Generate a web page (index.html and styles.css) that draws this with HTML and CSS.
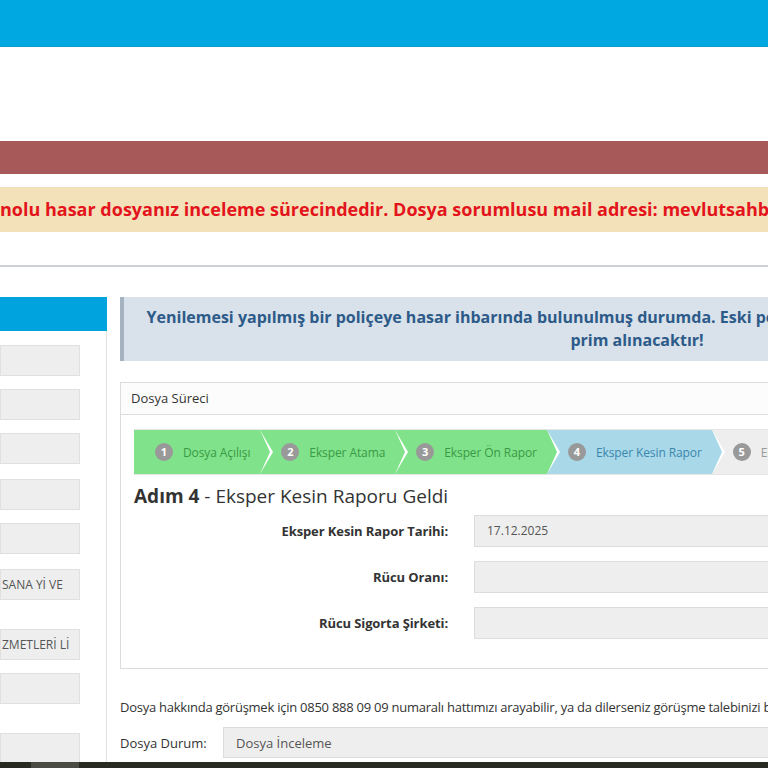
FILE: index.html
```html
<!DOCTYPE html>
<html lang="tr">

<head>
    <meta charset="UTF-8">
    <meta name="viewport" content="width=device-width, initial-scale=1.0">
    <title>Hasar Dosyası</title>
    <link rel="stylesheet" href="styles.css">
</head>

<body>
    <div class="topbar"></div>
    <div class="logo-area"></div>
    <div class="menu"></div>

    <div class="alert">nolu hasar dosyanız inceleme sürecindedir. Dosya sorumlusu mail adresi: mevlutsahbaz@sigorta.com.tr</div>

    <div class="divider"></div>

    <div class="content">
        <div class="side">
            <div class="side-head"></div>
            <div class="side-body">
                <div class="field"></div>
                <div class="field"></div>
                <div class="field field-gap"></div>
                <div class="field"></div>
                <div class="field field-gap"></div>
                <div class="field field-wide">SANA Yİ VE</div>
                <div class="field">ZMETLERİ Lİ</div>
                <div class="field field-wide"></div>
                <div class="field"></div>
            </div>
        </div>

        <div class="main">
            <div class="notice">
                Yenilemesi yapılmış bir poliçeye hasar ihbarında bulunulmuş durumda. Eski poliçeden hasarlı olduğu için yeni poliçeden ek<br>
                prim alınacaktır!
            </div>

            <div class="panel">
                <div class="panel-head">Dosya Süreci</div>
                <div class="panel-body">
                    <ul class="wizard">
                        <li class="step done"><span class="badge">1</span>Dosya Açılışı</li>
                        <li class="step done"><span class="badge">2</span>Eksper Atama</li>
                        <li class="step done"><span class="badge">3</span>Eksper Ön Rapor</li>
                        <li class="step active"><span class="badge">4</span>Eksper Kesin Rapor</li>
                        <li class="step"><span class="badge">5</span>Eksper Rapor Onayı</li>
                    </ul>

                    <h3 class="step-title"><b>Adım 4</b> - Eksper Kesin Raporu Geldi</h3>

                    <div class="form-row">
                        <label>Eksper Kesin Rapor Tarihi:</label>
                        <div class="value">17.12.2025</div>
                    </div>
                    <div class="form-row">
                        <label>Rücu Oranı:</label>
                        <div class="value"></div>
                    </div>
                    <div class="form-row">
                        <label>Rücu Sigorta Şirketi:</label>
                        <div class="value"></div>
                    </div>
                </div>
            </div>

            <p class="contact">Dosya hakkında görüşmek için 0850 888 09 09 numaralı hattımızı arayabilir, ya da dilerseniz görüşme talebinizi bize iletebilirsiniz.</p>

            <div class="status">
                <span class="status-label">Dosya Durum:</span>
                <div class="value">Dosya İnceleme</div>
            </div>
        </div>
    </div>

    <div class="footer">
        <span class="footer-block"></span>
    </div>
</body>

</html>
```

FILE: styles.css
```css
* {
    padding: 0;
    margin: 0;
    box-sizing: border-box;
}

body {
    width: 768px;
    height: 768px;
    overflow: hidden;
    font-family: "Open Sans", "Liberation Sans", sans-serif;
    color: #333;
    background-color: #fff;
}

.topbar {
    height: 47px;
    background-color: #00a8e1;
    border-bottom: 1px solid #1496cc;
}

.logo-area {
    height: 94px;
}

.menu {
    height: 33px;
    background-color: #a65958;
}

.alert {
    margin-top: 13px;
    height: 45px;
    line-height: 45px;
    background-color: #f3e2b9;
    color: #e3141b;
    font-size: 18px;
    font-weight: bold;
    white-space: nowrap;
    overflow: hidden;
}

.divider {
    margin-top: 33px;
    height: 2px;
    background-color: #cdd1d5;
}

.content {
    display: flex;
    gap: 13px;
    margin-top: 30px;
    width: 1200px;
}

/* sol kolon */
.side {
    width: 107px;
    flex-shrink: 0;
    border-right: 1px solid #e2e2e2;
    height: 480px;
}

.side-head {
    height: 34px;
    background-color: #00a3de;
    margin-right: -1px;
}

.side-body {
    padding: 14px 26px 0 0;
}

.field {
    height: 31px;
    margin-bottom: 13px;
    background-color: #eee;
    border: 1px solid #e0e0e0;
    font-size: 12px;
    line-height: 29px;
    padding-left: 1px;
    color: #555;
    white-space: nowrap;
    overflow: hidden;
}

.field-gap {
    margin-bottom: 15px;
}

.field-wide {
    margin-bottom: 29px;
}

/* ana kolon */
.main {
    width: 1030px;
    flex-shrink: 0;
}

.notice {
    height: 64px;
    background-color: #d9e1ea;
    border-left: 4px solid #a5b2c0;
    color: #2d5b89;
    font-size: 16px;
    font-weight: bold;
    text-align: center;
    line-height: 23px;
    padding-top: 9px;
    white-space: nowrap;
}

.panel {
    margin-top: 21px;
    border: 1px solid #dcdcdc;
    height: 287px;
}

.panel-head {
    height: 32px;
    line-height: 31px;
    padding-left: 10px;
    font-size: 13px;
    border-bottom: 1px solid #ddd;
    background-color: #fcfcfc;
}

.panel-body {
    padding: 14px 13px 0 13px;
}

.wizard {
    list-style: none;
    display: flex;
    height: 46px;
    background-color: #eee;
    border-top: 1px solid #e6e6e6;
    border-bottom: 1px solid #e6e6e6;
    overflow: hidden;
}

.step {
    position: relative;
    display: flex;
    align-items: center;
    padding: 0 10px 0 21px;
    font-size: 12px;
    letter-spacing: -0.1px;
    white-space: nowrap;
    color: #999;
    background-color: #eee;
}

.step::after,
.step::before {
    content: "";
    position: absolute;
    top: 0;
    width: 0;
    height: 0;
    border-top: 22px solid transparent;
    border-bottom: 22px solid transparent;
}

.step::after {
    right: -13px;
    border-left: 13px solid #fff;
    z-index: 2;
}

.step::before {
    right: -10px;
    border-left: 10px solid #eee;
    z-index: 3;
}

.step.done {
    background-color: #80e28a;
    color: #3a9a46;
}

.step.done::before {
    border-left-color: #80e28a;
}

.step.active {
    background-color: #a9d8e8;
    color: #3a87ad;
}

.step.active::before {
    border-left-color: #a9d8e8;
}

.badge {
    width: 18px;
    height: 18px;
    border-radius: 50%;
    background-color: #999;
    color: #fff;
    font-size: 11px;
    font-weight: bold;
    line-height: 18px;
    text-align: center;
    letter-spacing: 0;
    margin-right: 10px;
}

.step-title {
    font-size: 19px;
    font-weight: normal;
    margin: 8px 0 6px 0;
    line-height: 26px;
}

.form-row {
    display: flex;
    align-items: center;
    margin-bottom: 14px;
}

.form-row label {
    width: 314px;
    text-align: right;
    font-size: 13px;
    font-weight: bold;
    letter-spacing: -0.1px;
    margin-right: 26px;
}

.value {
    flex: 1;
    height: 32px;
    background-color: #eee;
    border: 1px solid #dcdcdc;
    font-size: 12px;
    line-height: 30px;
    padding-left: 12px;
    color: #555;
}

.contact {
    margin-top: 29px;
    font-size: 13px;
    white-space: nowrap;
    letter-spacing: -0.25px;
}

.status {
    display: flex;
    align-items: center;
    margin-top: 11px;
}

.status-label {
    width: 103px;
    font-size: 13px;
}

.status .value {
    height: 31px;
    padding-left: 12px;
    font-size: 13px;
}

.footer {
    position: fixed;
    left: 0;
    top: 762px;
    width: 768px;
    height: 6px;
    background-color: #272a21;
}

.footer-block {
    display: block;
    width: 48px;
    height: 6px;
    margin-left: 31px;
    background-color: #4a4c43;
}
```
